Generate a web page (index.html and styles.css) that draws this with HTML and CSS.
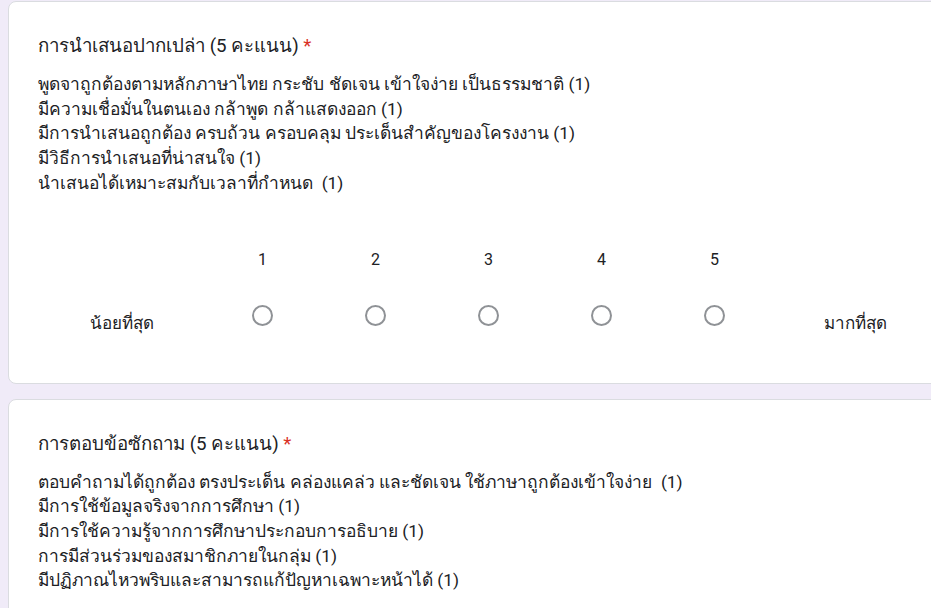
FILE: index.html
```html
<!DOCTYPE html>
<html lang="th">
<head>
    <meta charset="UTF-8">
    <meta name="viewport" content="width=device-width, initial-scale=1.0">
    <title>แบบประเมิน</title>
    <link rel="stylesheet" href="styles.css">
</head>
<body>
    <div class="form">
        <div class="card">
            <div class="title">การนำเสนอปากเปล่า (5 คะแนน) <span class="req">*</span></div>
            <div class="desc">
                <div>พูดจาถูกต้องตามหลักภาษาไทย กระชับ ชัดเจน เข้าใจง่าย เป็นธรรมชาติ (1)</div>
                <div>มีความเชื่อมั่นในตนเอง กล้าพูด กล้าแสดงออก (1)</div>
                <div>มีการนำเสนอถูกต้อง ครบถ้วน ครอบคลุม ประเด็นสำคัญของโครงงาน (1)</div>
                <div>มีวิธีการนำเสนอที่น่าสนใจ (1)</div>
                <div>นำเสนอได้เหมาะสมกับเวลาที่กำหนด&nbsp; (1)</div>
            </div>
            <div class="scale">
                <div class="scale-label">น้อยที่สุด</div>
                <label class="opt"><span class="num">1</span><span class="radio"></span></label>
                <label class="opt"><span class="num">2</span><span class="radio"></span></label>
                <label class="opt"><span class="num">3</span><span class="radio"></span></label>
                <label class="opt"><span class="num">4</span><span class="radio"></span></label>
                <label class="opt"><span class="num">5</span><span class="radio"></span></label>
                <div class="scale-label">มากที่สุด</div>
            </div>
        </div>

        <div class="card">
            <div class="title">การตอบข้อซักถาม (5 คะแนน) <span class="req">*</span></div>
            <div class="desc">
                <div>ตอบคำถามได้ถูกต้อง ตรงประเด็น คล่องแคล่ว และชัดเจน ใช้ภาษาถูกต้องเข้าใจง่าย&nbsp; (1)</div>
                <div>มีการใช้ข้อมูลจริงจากการศึกษา (1)</div>
                <div>มีการใช้ความรู้จากการศึกษาประกอบการอธิบาย (1)</div>
                <div>การมีส่วนร่วมของสมาชิกภายในกลุ่ม (1)</div>
                <div>มีปฏิภาณไหวพริบและสามารถแก้ปัญหาเฉพาะหน้าได้ (1)</div>
            </div>
        </div>
    </div>
</body>
</html>
```

FILE: styles.css
```css
body {
    margin: 0;
    background: #f0ebf8;
    font-family: Roboto, "Noto Sans", sans-serif;
    color: #202124;
    overflow: hidden;
}
.form {
    padding: 1px 0 0 8px;
    width: 960px;
}
.card {
    background: white;
    border: 1px solid #dadce0;
    border-radius: 8px;
    padding: 32px 24px 48px 29px;
    margin-bottom: 15px;
}
.title {
    font-size: 18.7px;
    line-height: 24px;
}
.req {
    color: #d93025;
}
.desc {
    margin-top: 14px;
    font-size: 17.4px;
    line-height: 24.7px;
}
.scale {
    display: flex;
    align-items: flex-end;
    margin-top: 52px;
}
.scale-label {
    width: 168px;
    text-align: center;
    font-size: 17px;
    line-height: 24px;
}
.opt {
    width: 113px;
    display: flex;
    flex-direction: column;
    align-items: center;
    padding-bottom: 9px;
}
.num {
    font-size: 16px;
    line-height: 24px;
}
.radio {
    width: 21px;
    height: 21px;
    box-sizing: border-box;
    border: 2px solid #8f9296;
    border-radius: 50%;
    margin-top: 33px;
}
```
